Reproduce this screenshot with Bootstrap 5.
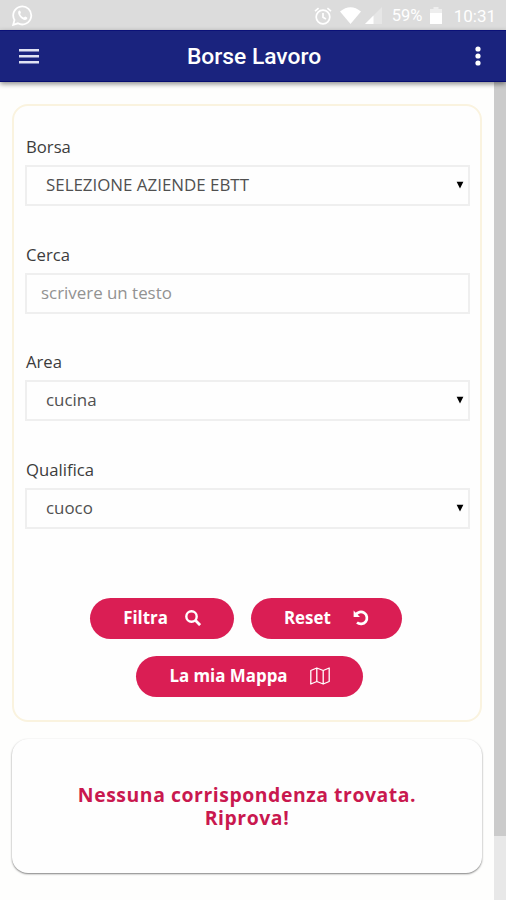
<!DOCTYPE html>
<html lang="it">
<head>
<meta charset="utf-8">
<meta name="viewport" content="width=device-width, initial-scale=1">
<title>Borse Lavoro</title>
<link href="https://cdn.jsdelivr.net/npm/bootstrap@5.3.0/dist/css/bootstrap.min.css" rel="stylesheet">
<style>
body{font-family:"Open Sans",sans-serif;background:#fefefd;height:900px;overflow:hidden}
svg{display:block;flex:none}
.statusbar{height:30px;background:#dcdcdc;color:#fff;font:400 17px/30px Roboto,sans-serif;padding:1px 10px 0 12px}
.pct{margin-left:10px;width:31px;white-space:nowrap;font-size:16.5px}
.bat{margin-left:7px}
.clock{margin-left:12px}
.appbar{height:52px;background:#1a237e;border-top:1px solid #0b1178;border-bottom:1px solid #070d70;box-shadow:0 2px 5px rgba(0,0,0,.45);z-index:2;padding:0 25px 0 19px;flex:none}
.appbar h1{font:500 22.8px/50px Roboto,sans-serif;color:#fff;padding:1px 6px 0 0}
.content{padding:22px 12px 0}
.scroll-track{width:12px;background:#e8e8e8;flex:none}
.scroll-thumb{height:754px;background:#cbcbcb}
.filters{height:618px;width:470px;border:2px solid #faf3df;border-radius:16px;padding:30px 10px 0 11px;background:#fefefe}
.field{height:107.7px}
.field label{display:block;font-size:16.7px;line-height:22px;color:#3c3c3c;margin:0 0 7px 1px}
.field .form-select,.field .form-control{height:41px;border:2px solid #efefef;border-radius:0;background-color:#fefefe;font-size:16.9px;line-height:24px;padding:6px 14px 7px;color:#505050;width:445px}
.field .form-select{padding-left:19px;background-image:url("data:image/svg+xml,%3Csvg xmlns='http://www.w3.org/2000/svg' viewBox='0 0 8 8'%3E%3Cpath d='M.6.8h6.800L4 7.400z' fill='%23000'/%3E%3C/svg%3E");background-size:8px 8px;background-position:right 4px top 14px}
.field .form-control::placeholder{color:#929292;opacity:1}
.actions{padding:31px 3px 0 0;column-gap:17px;row-gap:17px}
.actions .btn{--bs-btn-bg:#da1e54;--bs-btn-color:#fff;--bs-btn-border-width:0;height:41px;border-radius:21px;font-size:16.9px;font-weight:700;line-height:24px;padding:0 33px;gap:17px}
.actions .btn.gap-reset{gap:22px}
.actions .btn.gap-map{gap:22px;margin-left:7px}
.result{height:134px;width:470px;margin-top:17px;border:0;border-radius:16px;background:#fefefe;box-shadow:0 1px 2px rgba(0,0,0,.5);color:#c9184f;font-weight:700;font-size:19.4px;letter-spacing:.55px;line-height:23px}
</style>
<script src="https://cdn.jsdelivr.net/npm/bootstrap@5.3.0/dist/js/bootstrap.bundle.min.js"></script>
</head>
<body class="d-flex flex-column m-0">
<div class="statusbar d-flex align-items-center justify-content-between flex-shrink-0">
  <svg width="21" height="21" viewBox="0 0 21 21" fill="none" stroke="#fff" stroke-width="1.8"><path d="M1.2 19.8 2.5 15a9 9 0 1 1 3.4 3.3z"/><path d="M6.4 6.2c.6-1 1.6-.9 1.9-.2l.6 1.6c.2.6-.9 1.2-.7 1.6.8 1.6 1.8 2.6 3.6 3.3.5.1 1-1.1 1.5-.9l1.8.9c.6.4-.1 2-1 2.3-3.8 1.2-9.2-5.3-7.7-8.6z" fill="#fff" stroke="none"/></svg>
  <div class="d-flex align-items-center">
    <svg width="18" height="18" viewBox="0 0 18 18" fill="none" stroke="#fff" stroke-width="1.7"><circle cx="9" cy="10" r="6.8"/><path d="M9 6v4.300l3 1.700M1 4.200l3.600-3M17 4.200l-3.600-3"/></svg>
    <svg class="ms-2" width="21" height="17" viewBox="0 0 21 17"><path d="M0 4.500Q10.500-4 21 4.500L10.500 17z" fill="#fff"/></svg>
    <svg class="ms-1" width="17" height="17" viewBox="0 0 17 17"><path d="M0 17 17 0v17z" fill="#fff" opacity=".3"/><path d="M0 17 8.500 8.500V17z" fill="#fff"/></svg>
    <span class="pct">59%</span>
    <svg class="bat" width="12" height="17" viewBox="0 0 12 17"><path d="M0 2h3.500V0h5v2H12v5H0z" fill="#fff" opacity=".5"/><path d="M0 6h12v11H0z" fill="#fff"/></svg>
    <span class="clock">10:31</span>
  </div>
</div>
<nav class="appbar d-flex align-items-center justify-content-between position-relative">
  <svg width="20" height="16" viewBox="0 0 20 16" fill="#e0e2f3"><path d="M0 1h20v2.500H0zM0 7h20v2.500H0zM0 13h20v2.500H0z"/></svg>
  <h1 class="m-0">Borse Lavoro</h1>
  <svg width="6" height="20" viewBox="0 0 6 20" fill="#fff"><circle cx="3" cy="3" r="2.600"/><circle cx="3" cy="10" r="2.600"/><circle cx="3" cy="17" r="2.600"/></svg>
</nav>
<div class="d-flex flex-grow-1">
  <main class="content d-flex flex-column align-items-center flex-grow-1">
    <form class="filters">
      <div class="field"><label for="borsa">Borsa</label><select id="borsa" class="form-select"><option>SELEZIONE AZIENDE EBTT</option></select></div>
      <div class="field"><label for="cerca">Cerca</label><input id="cerca" class="form-control" placeholder="scrivere un testo"></div>
      <div class="field"><label for="area">Area</label><select id="area" class="form-select"><option>cucina</option></select></div>
      <div class="field"><label for="qualifica">Qualifica</label><select id="qualifica" class="form-select"><option>cuoco</option></select></div>
      <div class="actions d-flex flex-wrap justify-content-center">
        <button type="button" class="btn d-flex align-items-center">Filtra<svg width="16" height="16" viewBox="0 0 16 16" fill="none" stroke="#fff" stroke-width="2.400"><circle cx="6.500" cy="6.500" r="5.200"/><path d="m10.300 10.300 4.800 4.800" stroke-width="2.800"/></svg></button>
        <button type="button" class="btn gap-reset d-flex align-items-center">Reset<svg width="16" height="16" viewBox="0 0 16 16" fill="none" stroke="#fff" stroke-width="2.700"><path d="M2.700 5A6 6 0 1 1 4 12.500"/><path d="M.6.600V7h6.400z" fill="#fff" stroke="none"/></svg></button>
        <button type="button" class="btn gap-map d-flex align-items-center">La mia Mappa<svg width="20" height="18" viewBox="0 0 20 18" fill="none" stroke="#fff" stroke-width="1.300" stroke-linejoin="round"><path d="M.8 3.500 6.800 1l6.400 2.500L19.200 1v13.500L13.200 17l-6.400-2.500L.8 17zM6.800 1v13.500M13.200 3.500V17"/></svg></button>
      </div>
    </form>
    <div class="result card d-flex align-items-center justify-content-center text-center"><p class="m-0">Nessuna corrispondenza trovata.<br>Riprova!</p></div>
  </main>
  <div class="scroll-track"><div class="scroll-thumb"></div></div>
</div>
</body>
</html>
